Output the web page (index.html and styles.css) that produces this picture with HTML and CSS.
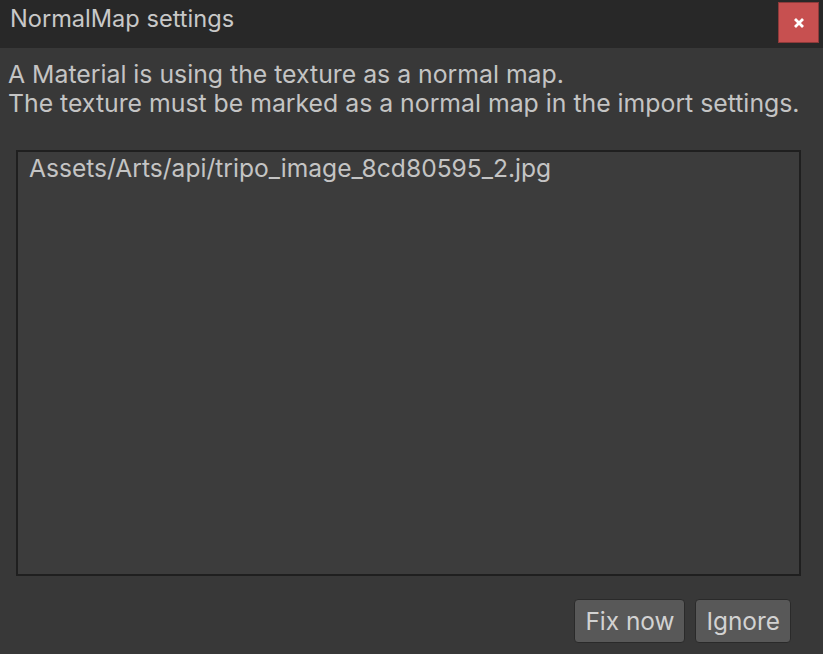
FILE: index.html
```html
<!DOCTYPE html>
<html>
<head>
<meta charset="utf-8">
<link rel="stylesheet" href="styles.css">
</head>
<body>
<div class="window">
  <div class="titlebar">
    <span class="title">NormalMap settings</span>
    <button class="close" aria-label="Close">
      <svg width="12" height="12" viewBox="0 0 12 12"><path d="M2 2 L10 10 M10 2 L2 10" stroke="#fff" stroke-width="2.8" stroke-linecap="butt"/></svg>
    </button>
  </div>
  <div class="content">
    <p class="message">A Material is using the texture as a normal map.<br>The texture must be marked as a normal map in the import settings.</p>
    <div class="listbox">
      <div class="item">Assets/Arts/api/tripo_image_8cd80595_2.jpg</div>
    </div>
    <div class="actions">
      <button class="btn">Fix now</button>
      <button class="btn">Ignore</button>
    </div>
  </div>
</div>
</body>
</html>
```
FILE: styles.css
```css
html, body {
  margin: 0;
  padding: 0;
  width: 823px;
  height: 654px;
  overflow: hidden;
  background: #383838;
  font-family: Inter, "Noto Sans", sans-serif;
  color: #c4c4c4;
}
.window {
  display: flex;
  flex-direction: column;
  height: 654px;
}
.titlebar {
  height: 48px;
  background: #282828;
  display: flex;
  align-items: flex-start;
  justify-content: space-between;
  box-sizing: border-box;
  padding: 2px 4px 0 10px;
}
.title {
  font-size: 23.6px;
  line-height: 34px;
  color: #c8c8c8;
}
.close {
  width: 41px;
  height: 41px;
  background: #c75050;
  border: 1px solid #8e3a3a;
  border-radius: 0;
  padding: 0;
  display: flex;
  align-items: center;
  justify-content: center;
}
.content {
  flex: 1;
  display: flex;
  flex-direction: column;
}
.message {
  margin: 0;
  padding: 12px 8px 0 8px;
  font-size: 24.8px;
  line-height: 29px;
  color: #c4c4c4;
}
.listbox {
  margin: 32px 22px 0 16px;
  height: 426px;
  box-sizing: border-box;
  border: 2px solid #1f1f1f;
  background: #3c3c3c;
  padding: 1px 11px;
}
.item {
  font-size: 24.6px;
  line-height: 30px;
  color: #c4c4c4;
}
.actions {
  display: flex;
  justify-content: flex-end;
  gap: 10px;
  margin: 23px 32px 0 0;
}
.btn {
  height: 44px;
  box-sizing: border-box;
  background: #585858;
  border: 1px solid #2a2a2a;
  border-radius: 4px;
  font-family: Inter, "Noto Sans", sans-serif;
  font-size: 24.4px;
  color: #d2d2d2;
  padding: 0 10px;
}
```
